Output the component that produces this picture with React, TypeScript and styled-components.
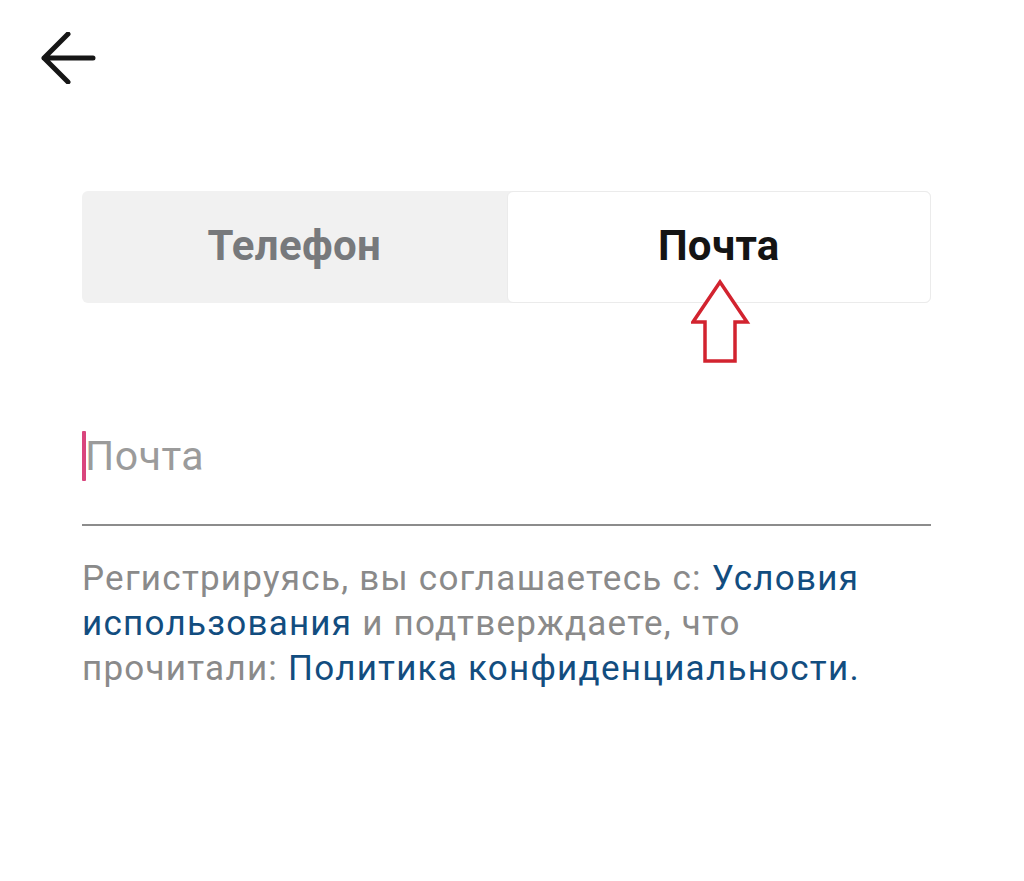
import React from 'react';
import styled, { createGlobalStyle } from 'styled-components';

const GlobalStyle = createGlobalStyle`
  html, body {
    margin: 0;
    padding: 0;
    background: #ffffff;
  }
  body {
    font-family: Roboto, "Noto Sans", "Liberation Sans", sans-serif;
  }
`;

const Screen = styled.div`
  width: 1024px;
  height: 881px;
  overflow: hidden;
  background: #ffffff;
  display: flex;
  flex-direction: column;
`;

const TopBar = styled.div`
  height: 116px;
  display: flex;
  align-items: flex-start;
  padding: 32px 0 0 40px;
  box-sizing: border-box;
`;

const BackButton = styled.button`
  border: 0;
  background: transparent;
  padding: 0;
  width: 56px;
  height: 52px;
  display: flex;
  cursor: pointer;
`;

const Content = styled.div`
  padding: 75px 93px 0 82px;
  display: flex;
  flex-direction: column;
`;

const Tabs = styled.div`
  position: relative;
  display: grid;
  grid-template-columns: 1fr 1fr;
  height: 112px;
  border-radius: 6px;
  background: #f1f1f1;
`;

const Tab = styled.button<{ $active?: boolean }>`
  border: ${p => (p.$active ? '1px solid #ebebeb' : '0')};
  border-radius: 6px;
  background: ${p => (p.$active ? '#ffffff' : 'transparent')};
  color: ${p => (p.$active ? '#141414' : '#77797c')};
  font-family: Roboto, "Noto Sans", sans-serif;
  font-weight: 700;
  font-size: 42px;
  letter-spacing: 0.3px;
  padding: 0;
  padding-bottom: 4px;
  cursor: pointer;
`;

/* red annotation arrow drawn over the tabs */
const Pointer = styled.svg`
  position: absolute;
  left: 609px;
  top: 88px;
`;

const Field = styled.div`
  margin-top: 124px;
  height: 97px;
  border-bottom: 2px solid #8c8c8c;
  display: flex;
  align-items: flex-start;
`;

const Caret = styled.span`
  width: 4px;
  height: 50px;
  margin-top: 4px;
  background: #d9457d;
  border-radius: 1px;
`;

const Placeholder = styled.span`
  font-size: 41px;
  line-height: 58px;
  color: #9b9b9b;
  margin-left: -1px;
  letter-spacing: 0.5px;
`;

const Terms = styled.p`
  margin: 30px 0 0 0;
  font-size: 35px;
  line-height: 45px;
  color: #8a8a8a;
  letter-spacing: 1.25px;
`;

const TermsLink = styled.a`
  color: #124d7f;
  text-decoration: none;
`;

export default function App() {
  return (
    <Screen>
      <GlobalStyle />
      <TopBar>
        <BackButton aria-label="Назад">
          <svg width="56" height="52" viewBox="0 0 56 52" fill="none">
            <path
              d="M28 2 L4 26 L28 50 M4 26 H53"
              stroke="#161616"
              strokeWidth="5"
              strokeLinecap="round"
              strokeLinejoin="round"
            />
          </svg>
        </BackButton>
      </TopBar>
      <Content>
        <Tabs>
          <Tab>Телефон</Tab>
          <Tab $active>Почта</Tab>
          <Pointer width="60" height="86" viewBox="0 0 60 86" fill="none">
            <path
              d="M29 3 L56 43 H44 V82 H14 V43 H2 Z"
              fill="#ffffff"
              stroke="#d2232f"
              strokeWidth="3.5"
              strokeLinejoin="miter"
            />
          </Pointer>
        </Tabs>
        <Field>
          <Caret />
          <Placeholder>Почта</Placeholder>
        </Field>
        <Terms>
          Регистрируясь, вы соглашаетесь с: <TermsLink href="#">Условия использования</TermsLink> и
          подтверждаете, что прочитали: <TermsLink href="#">Политика конфиденциальности.</TermsLink>
        </Terms>
      </Content>
    </Screen>
  );
}
